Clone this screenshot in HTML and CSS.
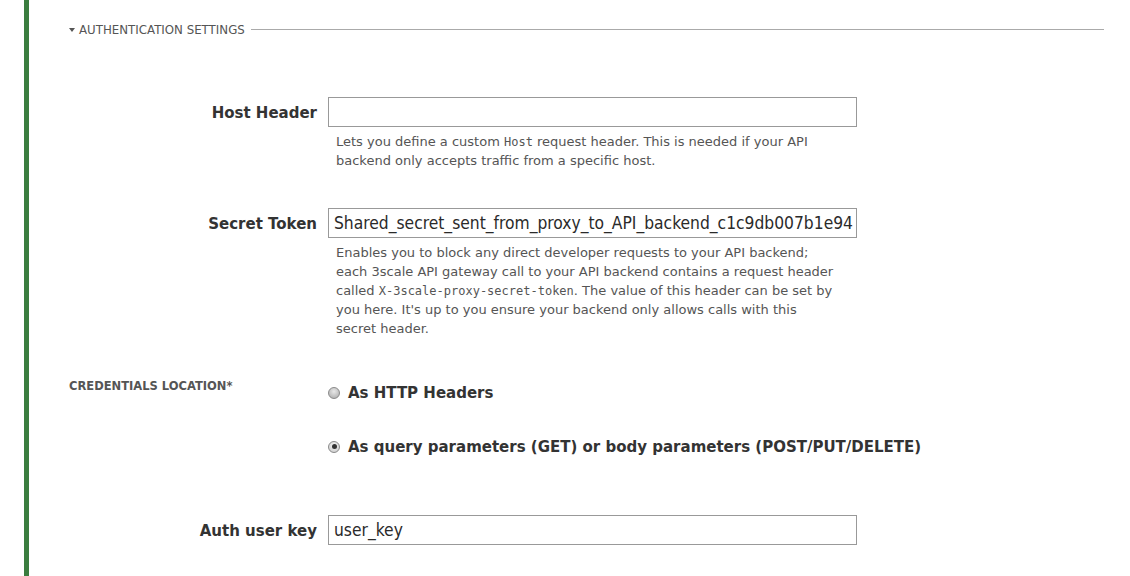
FILE: index.html
```html
<!DOCTYPE html>
<html>
<head>
<meta charset="utf-8">
<link rel="stylesheet" href="styles.css">
</head>
<body>
<div class="page">
  <div class="bar"></div>
  <div class="content">
    <div class="legend">
      <span class="caret"></span>
      <span class="legend-text">AUTHENTICATION SETTINGS</span>
      <span class="legend-line"></span>
    </div>

    <div class="field field-host">
      <label class="label">Host Header</label>
      <div class="control">
        <div class="input"></div>
        <p class="hint">Lets you define a custom <code>Host</code> request header. This is needed if your API<br>backend only accepts traffic from a specific host.</p>
      </div>
    </div>

    <div class="field field-secret">
      <label class="label">Secret Token</label>
      <div class="control">
        <div class="input"><span class="value">Shared_secret_sent_from_proxy_to_API_backend_c1c9db007b1e94</span></div>
        <p class="hint">Enables you to block any direct developer requests to your API backend;<br>each 3scale API gateway call to your API backend contains a request header<br>called <code>X-3scale-proxy-secret-token</code>. The value of this header can be set by<br>you here. It's up to you ensure your backend only allows calls with this<br>secret header.</p>
      </div>
    </div>

    <div class="radio-group">
      <div class="group-label">CREDENTIALS LOCATION*</div>
      <div class="radios">
        <div class="radio-row"><span class="radio"></span><span class="radio-label">As HTTP Headers</span></div>
        <div class="radio-row"><span class="radio checked"></span><span class="radio-label">As query parameters (GET) or body parameters (POST/PUT/DELETE)</span></div>
      </div>
    </div>

    <div class="field field-key">
      <label class="label">Auth user key</label>
      <div class="control">
        <div class="input"><span class="value">user_key</span></div>
      </div>
    </div>
  </div>
</div>
</body>
</html>
```

FILE: styles.css
```css
html, body {
  margin: 0;
  padding: 0;
  background: #fff;
}
body {
  font-family: "DejaVu Sans", Verdana, sans-serif;
  color: #333;
  overflow: hidden;
}
.page {
  display: flex;
  height: 576px;
}
.bar {
  width: 5px;
  margin-left: 24px;
  background: #3b7d3f;
  flex: none;
}
.content {
  flex: 1;
  padding-left: 40px;
  padding-right: 26px;
}
.legend {
  display: flex;
  align-items: center;
  height: 16px;
  margin-top: 22px;
}
.caret {
  width: 0;
  height: 0;
  border-left: 3.5px solid transparent;
  border-right: 3.5px solid transparent;
  border-top: 4px solid #555;
  margin-right: 4px;
}
.legend-text {
  font-size: 11.8px;
  color: #555;
}
.legend-line {
  flex: 1;
  height: 1px;
  background: #aaa;
  margin-left: 6px;
  margin-top: -2px;
}
.field {
  display: grid;
  grid-template-columns: 248px 529px;
  column-gap: 11px;
}
.field-host { margin-top: 59px; }
.field-secret { margin-top: 38px; }
.field-key { margin-top: 59px; }
.label {
  text-align: right;
  font-weight: bold;
  font-size: 15px;
  color: #333;
  line-height: 30px;
  padding-top: 1px;
}
.input {
  box-sizing: border-box;
  height: 30px;
  border: 1px solid #999;
  background: #fff;
  padding: 0 5px;
  line-height: 28px;
  overflow: hidden;
  white-space: nowrap;
}
.value {
  font-family: "DejaVu Sans Condensed", "DejaVu Sans", sans-serif;
  font-stretch: condensed;
  font-size: 17.3px;
  color: #2a2a2a;
}
.hint {
  margin: 5px 0 0 8px;
  font-size: 13px;
  line-height: 19px;
  color: #555;
  width: 540px;
}
.hint code {
  font-family: "DejaVu Sans Mono", monospace;
  font-size: 12px;
  line-height: 1;
}
.radio-group {
  display: flex;
  margin-top: 39px;
}
.group-label {
  width: 259px;
  font-size: 11.5px;
  font-weight: bold;
  color: #555;
  padding-top: 2px;
}
.radios {
  display: flex;
  flex-direction: column;
  gap: 35px;
  padding-top: 6px;
}
.radio-row {
  display: flex;
  align-items: center;
  height: 19px;
}
.radio {
  box-sizing: border-box;
  width: 12px;
  height: 12px;
  border-radius: 50%;
  border: 1px solid #8a8a8a;
  background: radial-gradient(circle at 50% 35%, #e8e8e8, #a8a8a8);
  margin-right: 8px;
  position: relative;
}
.radio.checked {
  background: radial-gradient(circle at 50% 35%, #f4f4f4, #c8c8c8);
}
.radio.checked::after {
  content: "";
  position: absolute;
  left: 2.5px;
  top: 2.5px;
  width: 5px;
  height: 5px;
  border-radius: 50%;
  background: #333;
}
.radio-label {
  font-weight: bold;
  font-size: 15px;
  color: #333;
}
```
